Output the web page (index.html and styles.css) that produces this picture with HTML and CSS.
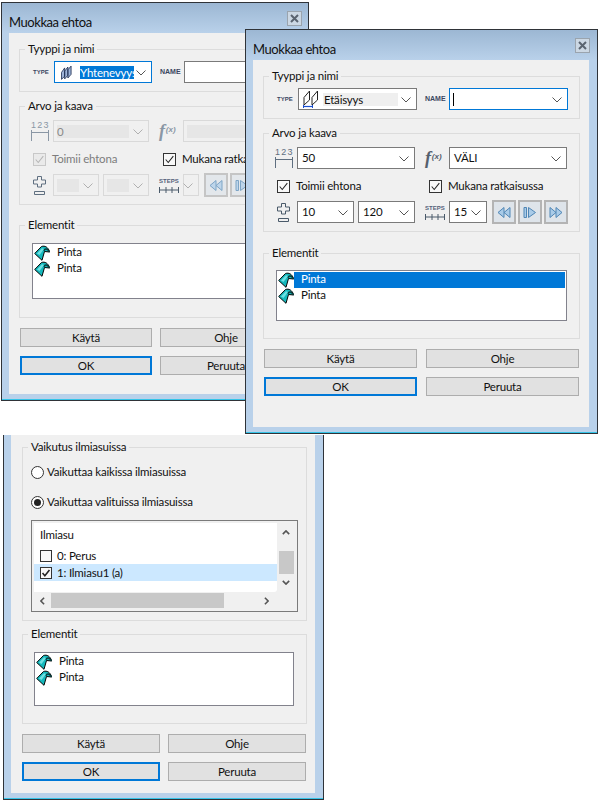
FILE: index.html
```html
<!DOCTYPE html>
<html lang="fi">
<head>
<meta charset="utf-8">
<title>Muokkaa ehtoa</title>
<link rel="stylesheet" href="styles.css">
</head>
<body>
<svg class="defs" width="0" height="0" aria-hidden="true">
  <symbol id="chev" viewBox="0 0 10 6"><path d="M.5 .5 5 5 9.500 .5" fill="none" stroke="currentColor"/></symbol>
  <symbol id="tick" viewBox="0 0 13 13"><path d="M2 6.500 5 10 11 2.500" fill="none" stroke="currentColor"/></symbol>
  <symbol id="surface" viewBox="0 0 16 16">
    <path d="M.7 8.500 7.500 1.500C11 .4 14 2 15.800 7L10.500 6.500 8 15.300Z" fill="#14b8bc" stroke="#000"/>
    <path d="M3 8.500 8 3.300 10 4 5.500 10Z" fill="#6fe0e2"/>
    <path d="M10 5.800C11 3 13.500 3.500 15.500 7" fill="none" stroke="#0a3a3a" stroke-width="1.500"/>
  </symbol>
  <symbol id="dim123" viewBox="0 0 18 11"><path d="M.5 0v11M17.500 0v11M1 2.500h16" fill="none" stroke="currentColor"/></symbol>
  <symbol id="plusminus" viewBox="0 0 13 19"><path d="M4.500 .5h4v3.500h4v4h-4v3h-4v-3h-4v-4h4zM1.500 15.500h10v3h-10z" fill="none" stroke="currentColor"/></symbol>
  <symbol id="steps" viewBox="0 0 20 6"><path d="M.5 0v6M7 0v6M13 0v6M19.500 0v6M0 3h20" fill="none" stroke="currentColor"/></symbol>
  <symbol id="rew" viewBox="0 0 14 13"><path d="M7 1.500V11.500L1 6.500ZM13 1.500V11.500L7 6.500Z" fill="#a9cbe8" stroke="#4f86b5" stroke-linejoin="round"/></symbol>
  <symbol id="play" viewBox="0 0 14 13"><path d="M1 1.500h2.500v10H1ZM5.500 1.500V11.500L12.500 6.500Z" fill="#a9cbe8" stroke="#4f86b5" stroke-linejoin="round"/></symbol>
  <symbol id="fwd" viewBox="0 0 14 13"><path d="M1 1.500V11.500L7 6.500ZM7 1.500V11.500L13 6.500Z" fill="#a9cbe8" stroke="#4f86b5" stroke-linejoin="round"/></symbol>
  <symbol id="close" viewBox="0 0 9 9"><path d="M1 1 8 8M8 1 1 8" fill="none" stroke="#5a6470" stroke-width="2"/></symbol>
  <symbol id="parallel" viewBox="0 0 12 16">
    <path d="M.5 8 4 3v9l-3.500 3.500ZM4 6.500 7.500 2v9L4 15ZM7.500 5 11 1v9l-3.500 4Z" fill="#9fb4d8" stroke="#1c2c50" stroke-width=".9"/>
  </symbol>
  <symbol id="distance" viewBox="0 0 16 18">
    <path d="M1 15V7.500L6.500 1V10L1 15ZM9 15V7.500L14.500 1V10L9 15Z" fill="none" stroke="#222"/>
    <path d="M1 16.500h8" stroke="#1a4fd0" stroke-width="1.200"/>
    <path d="M.5 15v3M9.500 15v3" stroke="#1a4fd0"/>
  </symbol>
  <symbol id="arrow-up" viewBox="0 0 10 6"><path d="M1 5 5 1 9 5" fill="none" stroke="#555" stroke-width="2"/></symbol>
  <symbol id="arrow-down" viewBox="0 0 10 6"><path d="M1 1 5 5 9 1" fill="none" stroke="#555" stroke-width="2"/></symbol>
  <symbol id="arrow-left" viewBox="0 0 6 10"><path d="M5 1 1 5 5 9" fill="none" stroke="#555" stroke-width="2"/></symbol>
  <symbol id="arrow-right" viewBox="0 0 6 10"><path d="M1 1 5 5 1 9" fill="none" stroke="#555" stroke-width="2"/></symbol>
</svg>

<section class="window win-a">
  <header class="titlebar"><span class="title">Muokkaa ehtoa</span><span class="close"><svg><use href="#close"/></svg></span></header>
  <div class="client">
    <div class="group group-type">
      <span class="legend">Tyyppi ja nimi</span>
      <div class="type-row">
        <span class="tiny tiny-type">TYPE</span>
        <div class="combo focus">
          <svg class="type-icon parallel"><use href="#parallel"/></svg>
          <span class="sel">Yhtenevyys</span>
          <svg class="chev"><use href="#chev"/></svg>
        </div>
        <span class="tiny tiny-name">NAME</span>
        <div class="combo"></div>
      </div>
    </div>
    <div class="group group-value">
      <span class="legend">Arvo ja kaava</span>
      <div class="value-row">
        <span class="dim"><span class="digits off">123</span><svg class="dim-line off"><use href="#dim123"/></svg></span>
        <div class="combo disabled"><span class="fill">0</span><svg class="chev"><use href="#chev"/></svg></div>
        <span class="fx off"><i>f</i><b>(x)</b></span>
        <div class="combo disabled"><span class="fill"></span></div>
      </div>
      <div class="check-row">
        <label class="check disabled"><span class="box"><svg><use href="#tick"/></svg></span>Toimii ehtona</label>
        <label class="check"><span class="box"><svg><use href="#tick"/></svg></span>Mukana ratkaisussa</label>
      </div>
      <div class="range-row">
        <span class="pm off"><svg><use href="#plusminus"/></svg></span>
        <div class="combo disabled narrow"><span class="fill"></span><svg class="chev"><use href="#chev"/></svg></div>
        <div class="combo disabled narrow"><span class="fill"></span><svg class="chev"><use href="#chev"/></svg></div>
        <span class="steps"><span class="tiny">STEPS</span><svg><use href="#steps"/></svg></span>
        <div class="combo disabled stepcount"><svg class="chev"><use href="#chev"/></svg></div>
        <div class="players">
          <span class="play disabled"><svg><use href="#rew"/></svg></span>
          <span class="play disabled"><svg><use href="#play"/></svg></span>
        </div>
      </div>
    </div>
    <div class="group group-items">
      <span class="legend">Elementit</span>
      <div class="list">
        <div class="item"><svg><use href="#surface"/></svg><span class="name">Pinta</span></div>
        <div class="item"><svg><use href="#surface"/></svg><span class="name">Pinta</span></div>
      </div>
    </div>
    <div class="actions">
      <button class="btn">Käytä</button><button class="btn">Ohje</button>
      <button class="btn default">OK</button><button class="btn">Peruuta</button>
    </div>
  </div>
</section>

<section class="window win-b">
  <header class="titlebar"><span class="title">Muokkaa ehtoa</span><span class="close"><svg><use href="#close"/></svg></span></header>
  <div class="client">
    <div class="group group-type">
      <span class="legend">Tyyppi ja nimi</span>
      <div class="type-row">
        <span class="tiny tiny-type">TYPE</span>
        <div class="combo">
          <svg class="type-icon distance"><use href="#distance"/></svg>
          <span class="shade">Etäisyys</span>
          <svg class="chev"><use href="#chev"/></svg>
        </div>
        <span class="tiny tiny-name">NAME</span>
        <div class="combo focus"><span class="caret"></span><svg class="chev"><use href="#chev"/></svg></div>
      </div>
    </div>
    <div class="group group-value">
      <span class="legend">Arvo ja kaava</span>
      <div class="value-row">
        <span class="dim"><span class="digits">123</span><svg class="dim-line"><use href="#dim123"/></svg></span>
        <div class="combo"><span class="value">50</span><svg class="chev"><use href="#chev"/></svg></div>
        <span class="fx"><i>f</i><b>(x)</b></span>
        <div class="combo"><span class="value">VÄLI</span><svg class="chev"><use href="#chev"/></svg></div>
      </div>
      <div class="check-row">
        <label class="check"><span class="box"><svg><use href="#tick"/></svg></span>Toimii ehtona</label>
        <label class="check"><span class="box"><svg><use href="#tick"/></svg></span>Mukana ratkaisussa</label>
      </div>
      <div class="range-row">
        <span class="pm"><svg><use href="#plusminus"/></svg></span>
        <div class="combo narrow"><span class="value">10</span><svg class="chev"><use href="#chev"/></svg></div>
        <div class="combo narrow"><span class="value">120</span><svg class="chev"><use href="#chev"/></svg></div>
        <span class="steps"><span class="tiny">STEPS</span><svg><use href="#steps"/></svg></span>
        <div class="combo stepcount"><span class="value">15</span><svg class="chev"><use href="#chev"/></svg></div>
        <div class="players">
          <span class="play"><svg><use href="#rew"/></svg></span>
          <span class="play"><svg><use href="#play"/></svg></span>
          <span class="play"><svg><use href="#fwd"/></svg></span>
        </div>
      </div>
    </div>
    <div class="group group-items">
      <span class="legend">Elementit</span>
      <div class="list">
        <div class="item selected"><svg><use href="#surface"/></svg><span class="name">Pinta</span></div>
        <div class="item"><svg><use href="#surface"/></svg><span class="name">Pinta</span></div>
      </div>
    </div>
    <div class="actions">
      <button class="btn">Käytä</button><button class="btn">Ohje</button>
      <button class="btn default">OK</button><button class="btn">Peruuta</button>
    </div>
  </div>
</section>

<section class="window win-c">
  <div class="client">
    <div class="group group-effect">
      <span class="legend">Vaikutus ilmiasuissa</span>
      <label class="radio"><span class="dot"></span>Vaikuttaa kaikissa ilmiasuissa</label>
      <label class="radio on"><span class="dot"></span>Vaikuttaa valituissa ilmiasuissa</label>
      <div class="listview">
        <div class="lv-body">
          <div class="lv-head">Ilmiasu</div>
          <div class="lv-row"><span class="box"></span>0: Perus</div>
          <div class="lv-row current"><span class="box"><svg><use href="#tick"/></svg></span>1: Ilmiasu1 (a)</div>
        </div>
        <div class="vbar">
          <svg><use href="#arrow-up"/></svg>
          <span class="vthumb"></span>
          <svg><use href="#arrow-down"/></svg>
        </div>
        <div class="hbar">
          <svg><use href="#arrow-left"/></svg>
          <span class="hthumb"></span>
          <svg><use href="#arrow-right"/></svg>
        </div>
      </div>
    </div>
    <div class="group group-items">
      <span class="legend">Elementit</span>
      <div class="list">
        <div class="item"><svg><use href="#surface"/></svg><span class="name">Pinta</span></div>
        <div class="item"><svg><use href="#surface"/></svg><span class="name">Pinta</span></div>
      </div>
    </div>
    <div class="actions">
      <button class="btn">Käytä</button><button class="btn">Ohje</button>
      <button class="btn default">OK</button><button class="btn">Peruuta</button>
    </div>
  </div>
</section>
</body>
</html>
```
FILE: styles.css
```css
* { box-sizing: border-box; }
html, body { margin: 0; padding: 0; background: #fff; }
body {
  position: relative;
  width: 600px;
  height: 800px;
  overflow: hidden;
  font: 11.500px/16px Lato, "Liberation Sans", sans-serif;
  letter-spacing: -.2px;
  color: #111;
}
.defs { position: absolute; }
svg { display: block; }

/* windows on the desktop */
.window {
  position: absolute;
  border: 1px solid #2f3338;
  padding: 0 8px 6px 7px;
  background: linear-gradient(#9cb7d3, #b9d1ea 30px) no-repeat, #b9d1ea;
  box-shadow: inset 0 -1px 0 #35c4e8;
  display: flex;
  flex-direction: column;
}
.win-a { left: 1px; top: 2px; width: 308px; height: 399px; --type: 98px; --value: 96px; --narrow: 46px; --count: 16px; --list-h: 56px; --btn: 132px; --btn-gap: 8px; }
.win-b { left: 245px; top: 29px; width: 353px; height: 405px; --type: 119px; --value: 118px; --narrow: 57px; --count: 38px; --list-h: 51px; --btn: 153px; --btn-gap: 9px; }
.win-c { left: 3px; top: 435px; width: 321px; height: 365px; --list-h: 54px; --btn: 138px; --btn-gap: 8px; background: #b9d1ea; border-top: 0; }

.titlebar { height: 30px; flex: none; display: flex; align-items: center; justify-content: space-between; }
.title { font-size: 13px; letter-spacing: -.45px; color: #111; margin-top: 8px; }
.close {
  width: 15px; height: 15px;
  border: 1px solid #9aa4ae;
  background: #ccd8e4;
  display: flex; align-items: center; justify-content: center;
  margin: 1px -1px 0 0;
}
.win-a .close { margin-right: -2px; }
.close svg { width: 9px; height: 9px; }

.client { flex: 1; background: #f0f0f0; padding: 16px 9px 0 10px; }
.win-a .client { padding-right: 8px; }
.win-c .client { padding: 12px 8px 0 11px; }

/* groups */
.group { position: relative; border: 1px solid #dcdcdc; margin-bottom: 14px; }
.legend {
  position: absolute;
  top: -9px;
  left: 5px;
  padding: 0 3px;
  height: 16px;
  background: #f0f0f0;
  white-space: nowrap;
}
.group-type { height: 43px; padding-top: 11px; }
.group-value { height: 99px; padding-top: 13px; margin-bottom: 21px; }
.win-a .group-value { margin-bottom: 20px; }
.group-items { padding-top: 16px; padding-bottom: 17px; margin-bottom: 10px; }
.win-a .group-items { padding-top: 17px; padding-bottom: 18px; }
.win-c .group-items { padding-top: 17px; padding-bottom: 17px; }
.group-effect { height: 174px; margin-bottom: 13px; padding-top: 16px; }

/* rows */
.type-row { display: grid; grid-template-columns: 34px var(--type) 32px 119px; align-items: center; height: 22px; }
.tiny { font: bold 6px/8px "Liberation Sans", sans-serif; letter-spacing: 0; color: #3a4660; }
.tiny-type { padding-left: 13px; }
.tiny-name { padding-left: 8px; font-size: 7px; }
.value-row { display: grid; grid-template-columns: 33px var(--value) 34px var(--value); align-items: center; height: 22px; }
.check-row { display: grid; align-items: center; height: 32px; padding: 2px 0 0 13px; }
.win-a .check-row { grid-template-columns: 130px 1fr; }
.win-b .check-row { grid-template-columns: 152px 1fr; }
.range-row { display: flex; align-items: center; height: 22px; }

.combo {
  position: relative;
  height: 22px;
  border: 1px solid #7a7a7a;
  background: #fff;
  display: flex;
  align-items: center;
  padding-left: 3px;
}
.combo.focus { border-color: #0078d7; }
.combo.disabled { border-color: #d9d9d9; background: #f0f0f0; color: #8a8a8a; }
.combo .chev { position: absolute; right: 5px; top: 8px; width: 10px; height: 6px; color: #555; }
.combo.disabled .chev { color: #b0b0b0; }
.value { padding-left: 1px; }
.fill { display: block; flex: none; width: calc(100% - 19px); height: 13px; background: #e6e6e6; line-height: 13px; }
.narrow { width: var(--narrow); margin-right: 4px; }
.narrow + .steps { margin-left: -4px; }
.stepcount { width: var(--count); margin-right: 5px; flex: none; }
.type-icon { flex: none; }
.parallel { width: 11px; height: 15px; margin: 0 8px 0 3px; }
.distance { width: 16px; height: 18px; margin: 0 4px 0 1px; }
.sel { width: 54px; height: 13px; overflow: hidden; white-space: nowrap; background: #0078d7; color: #fff; line-height: 13px; flex: none; }
.shade { width: 75px; height: 13px; background: #efefef; line-height: 13px; flex: none; padding-left: 1px; }
.caret { width: 1px; height: 13px; background: #000; }

/* field icons */
.dim { display: block; padding-left: 11px; color: #5f6f80; }
.digits { display: block; font: 9px/9px "Liberation Sans", sans-serif; letter-spacing: 1.200px; margin-top: -1px; }
.dim-line { width: 18px; height: 11px; }
.fx { padding-left: 10px; color: #55606e; white-space: nowrap; display: flex; align-items: center; }
.fx i { font: italic bold 18px/18px "Liberation Serif", serif; }
.fx b { font: italic bold 8px/8px "Liberation Sans", sans-serif; letter-spacing: 0; margin: 0 0 3px 1px; }
.off { color: #8a97a5; }
.pm { display: block; width: 33px; padding-left: 13px; flex: none; color: #4a5a6a; }
.pm svg { width: 13px; height: 19px; }
.pm.off { color: #5f6f80; }
.steps { display: block; width: 34px; flex: none; padding-left: 10px; color: #4a5a6a; }
.steps .tiny { display: block; margin-bottom: 2px; color: #56627a; }
.steps svg { width: 20px; height: 6px; }

.check { display: flex; align-items: center; gap: 6px; white-space: nowrap; }
.box { display: block; flex: none; width: 13px; height: 13px; border: 1px solid #333; background: #f8f8f8; color: #222; stroke-width: 1.200; }
.box svg { width: 11px; height: 11px; }
.check.disabled { color: #7d7d7d; }
.check.disabled .box { border-color: #c8c8c8; background: #eaeaea; color: #b5b5b5; }

.players { display: flex; gap: 2px; flex: none; }
.play {
  width: 24px; height: 24px;
  border: 2px solid #b4b4b4;
  background: #dee4ea;
  display: flex; align-items: center; justify-content: center;
}
.play svg { width: 14px; height: 13px; }
.play.disabled { opacity: .7; }

/* lists */
.list {
  margin: 0 12px;
  height: var(--list-h);
  border: 1px solid #82828c;
  background: #fff;
  padding: 1px 1px 0 1px;
}
.win-c .list { margin: 0 12px 0 11px; }
.item { display: flex; align-items: center; height: 16px; }
.item svg { width: 16px; height: 16px; flex: none; }
.item .name { flex: 1; height: 16px; padding-left: 7px; line-height: 14px; }
.item.selected .name { background: #0078d7; color: #fff; }

.actions { display: grid; grid-template-columns: var(--btn) var(--btn); column-gap: var(--btn-gap); row-gap: 9px; padding-left: 1px; }
.win-c .actions { padding-left: 0; }
.btn {
  height: 19px;
  padding: 0;
  border: 1px solid #adadad;
  border-radius: 0;
  background: #e1e1e1;
  font: inherit;
  letter-spacing: inherit;
  color: #111;
}
.btn.default { border: 2px solid #0078d7; }

/* appearance panel */
.radio { display: flex; align-items: center; gap: 3px; height: 16px; margin: 0 0 14px 8px; white-space: nowrap; }
.dot { width: 13px; height: 13px; border: 1px solid #333; border-radius: 50%; background: #fff; flex: none; display: flex; align-items: center; justify-content: center; }
.radio.on .dot::after { content: ""; width: 7px; height: 7px; border-radius: 50%; background: #222; }
.listview {
  margin: -4px 0 0 8px;
  width: 267px;
  height: 92px;
  border: 1px solid #7a7a7a;
  padding: 2px;
  display: grid;
  grid-template-columns: 243px 18px;
  grid-template-rows: 69px 17px;
  background: #f0f0f0;
}
.lv-body { background: #fff; border-radius: 0 0 3px 0; }
.lv-head { padding: 4px 0 0 6px; height: 25px; }
.lv-row { display: flex; align-items: center; gap: 5px; height: 16px; padding-left: 6px; }
.lv-row.current { height: 17px; background: #cce8ff; }
.lv-row .box { width: 12px; height: 12px; stroke-width: 2; }
.lv-row .box svg { width: 10px; height: 10px; }
.vbar { display: flex; flex-direction: column; align-items: center; padding-top: 7px; }
.vbar svg { width: 8px; height: 5px; flex: none; }
.vthumb { display: block; width: 15px; height: 23px; margin: 16px 0 6px; background: #c8c8c8; flex: none; }
.hbar { display: flex; align-items: center; grid-column: 1 / 3; padding-left: 6px; }
.hbar svg { width: 5px; height: 8px; flex: none; }
.hthumb { display: block; width: 173px; height: 15px; margin: 0 40px 0 6px; background: #c8c8c8; flex: none; }
```
